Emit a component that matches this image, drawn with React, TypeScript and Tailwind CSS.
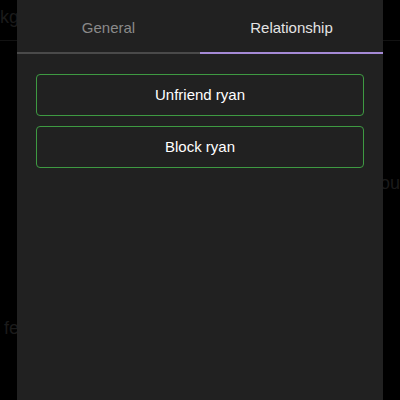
import React, { useState } from 'react';

const tabs = ['General', 'Relationship'];

export default function App() {
    const [active, setActive] = useState(1);
    const name = 'ryan';

    return (
        <div className="relative w-[400px] h-[400px] overflow-hidden bg-black font-['Liberation_Sans',Arial,sans-serif]">
            {/* dimmed page behind the sheet */}
            <div className="flex flex-col text-[#1b1b1b] text-[18px]">
                <div className="h-[41px] pt-[4px] border-b border-[#121212]">kg</div>
                <div className="h-[129px]" />
                <div className="h-[30px] flex justify-end">you</div>
                <div className="h-[115px]" />
                <div className="pl-[4px]">fe</div>
            </div>

            <div className="absolute top-0 bottom-0 left-[17px] right-[17px] bg-[#212121] flex flex-col">
                <div className="flex">
                    {tabs.map((t, i) => (
                        <button
                            key={t}
                            onClick={() => setActive(i)}
                            className={`flex-1 h-[54px] pt-[4px] text-[15px] flex items-center justify-center border-b-2 ${
                                active === i
                                    ? 'text-[#e4e4e4] border-[#a58ad6]'
                                    : 'text-[#8a8a8a] border-[#4a4a4a]'
                            }`}
                        >
                            {t}
                        </button>
                    ))}
                </div>
                <div className="flex flex-col gap-[10px] px-[19px] pt-[20px]">
                    <button className="h-[42px] rounded-[4px] border border-[#3e9a42] text-white text-[15px]">
                        Unfriend {name}
                    </button>
                    <button className="h-[42px] rounded-[4px] border border-[#3e9a42] text-white text-[15px]">
                        Block {name}
                    </button>
                </div>
            </div>
        </div>
    );
}
